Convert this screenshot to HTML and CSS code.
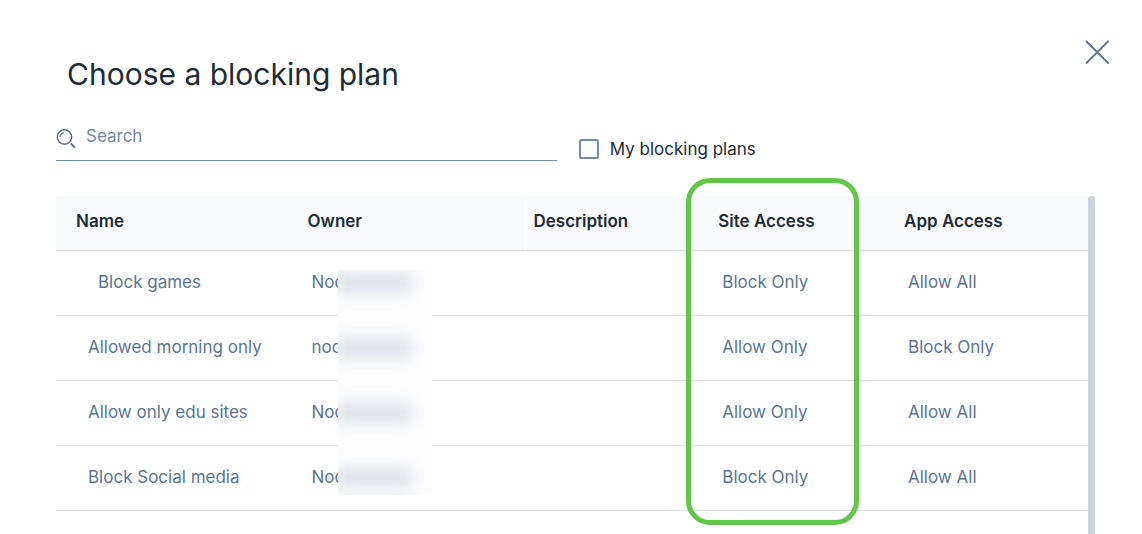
FILE: index.html
```html
<!DOCTYPE html>
<html lang="en">
<head>
<meta charset="utf-8">
<title>Choose a blocking plan</title>
<link rel="stylesheet" href="styles.css">
</head>
<body>
<main class="dialog">
  <header class="dialog-header">
    <h1 class="title">Choose a blocking plan</h1>
    <button class="close" type="button" aria-label="Close">
      <svg width="24" height="24" viewBox="0 0 24 24" fill="none" stroke="currentColor" stroke-width="1.800" stroke-linecap="round"><path d="M1.500 1.500 23 23M23 1.500 1.500 23"/></svg>
    </button>
  </header>
  <div class="filters">
    <label class="search">
      <svg class="search-icon" width="20" height="20" viewBox="0 0 20 20" fill="none" stroke="currentColor"><circle cx="8.5" cy="8" r="7.2" stroke-width="1.4"/><path d="M4 8C4 5.500 5.500 4 8 3.700" stroke-width="1.100"/><path d="M14.800 14.500 19 18.500" stroke-width="1.800"/></svg>
      <input class="search-input" type="text" placeholder="Search" aria-label="Search">
    </label>
    <label class="mine"><input class="check" type="checkbox">My blocking plans</label>
  </div>
  <div class="plans">
    <table class="table">
      <colgroup><col class="col-name"><col class="col-owner"><col class="col-std"><col class="col-std"><col></colgroup>
      <thead>
        <tr>
          <th class="name" scope="col">Name</th>
          <th class="anchor" scope="col">Owner
            <div class="redaction"><i class="smudge"></i><i class="smudge"></i><i class="smudge"></i><i class="smudge"></i></div>
          </th>
          <th class="divided" scope="col">Description</th>
          <th class="anchor" scope="col">Site Access<div class="highlight"></div></th>
          <th scope="col">App Access</th>
        </tr>
      </thead>
      <tbody>
        <tr><td class="name indented">Block games</td><td>Nod</td><td></td><td>Block Only</td><td>Allow All</td></tr>
        <tr><td class="name">Allowed morning only</td><td>nod</td><td></td><td>Allow Only</td><td>Block Only</td></tr>
        <tr><td class="name">Allow only edu sites</td><td>Nod</td><td></td><td>Allow Only</td><td>Allow All</td></tr>
        <tr><td class="name">Block Social media</td><td>Nod</td><td></td><td>Block Only</td><td>Allow All</td></tr>
      </tbody>
    </table>
    <div class="scrollbar"></div>
  </div>
</main>
</body>
</html>
```
FILE: styles.css
```css
* { box-sizing: border-box; }

body {
  margin: 0;
  background: #fff;
  color: #212b36;
  font: 17px/24px Inter, "Liberation Sans", sans-serif;
}

.dialog {
  display: flex;
  flex-direction: column;
  height: 100vh;
  padding: 40px 47px 0 56px;
  overflow: hidden;
}

.dialog-header {
  display: flex;
  justify-content: space-between;
  align-items: flex-start;
  margin-right: -14px;
}

.title {
  margin: 14px 0 0 11px;
  font-size: 30px;
  line-height: 40px;
  font-weight: 400;
}

.close {
  display: flex;
  padding: 0;
  border: 0;
  background: none;
  color: #5b7595;
}

.filters {
  display: flex;
  align-items: flex-start;
  gap: 22px;
  margin-top: 26px;
}

.search {
  display: flex;
  align-items: center;
  gap: 10px;
  width: 48.2%;
  height: 41px;
  padding-bottom: 8px;
  border-bottom: 1px solid #718ba6;
  color: #5b6f8d;
}

.search-icon { margin-top: 6px; }

.search-input {
  flex: 1;
  min-width: 0;
  padding: 0;
  border: 0;
  outline: 0;
  background: none;
  font: inherit;
  color: inherit;
}

.search-input::placeholder { color: #6e88a6; opacity: 1; }

.mine {
  display: flex;
  align-items: center;
  gap: 11px;
  height: 24px;
  margin-top: 17px;
}

.check {
  appearance: none;
  width: 20px;
  height: 20px;
  margin: 0;
  border: 2px solid #778ca8;
  border-radius: 2px;
}

.plans {
  display: flex;
  flex: 1;
  min-height: 0;
  margin-top: 35px;
}

.table {
  flex: 1;
  align-self: flex-start;
  width: 100%;
  table-layout: fixed;
  border-spacing: 0;
}

.col-name { width: 23.6%; }
.col-owner { width: 21.8%; }
.col-std { width: 18%; }

th, td {
  border-bottom: 1px solid #dcdee0;
  text-align: left;
}

th {
  height: 55px;
  padding: 0 8px 4px;
  background: #f9fafc;
  font-weight: 600;
}

td {
  height: 65px;
  padding: 0 12px 2px;
  color: #5b7595;
}

th.name { padding-left: 20px; }
td.name { padding-left: 32px; }
td.indented { padding-left: 42px; }
.divided { border-left: 1px solid #fff; }
.anchor { position: relative; }

.redaction {
  position: absolute;
  z-index: 1;
  top: 74px;
  left: 38px;
  display: flex;
  flex-direction: column;
  gap: 47px;
  width: 94px;
  height: 225px;
  padding-top: 4px;
  overflow: hidden;
  background: #fdfdfe;
}

.smudge {
  flex: none;
  width: 78px;
  height: 18px;
  margin-left: -4px;
  background: #d9dee5;
  filter: blur(8px);
}

.highlight {
  position: absolute;
  z-index: 2;
  top: -18px;
  left: -24px;
  width: 173px;
  height: 347px;
  border: 5px solid #62c648;
  border-radius: 24px;
}

.scrollbar {
  width: 7px;
  border-radius: 4px 4px 0 0;
  background: #cdd6df;
}
```
